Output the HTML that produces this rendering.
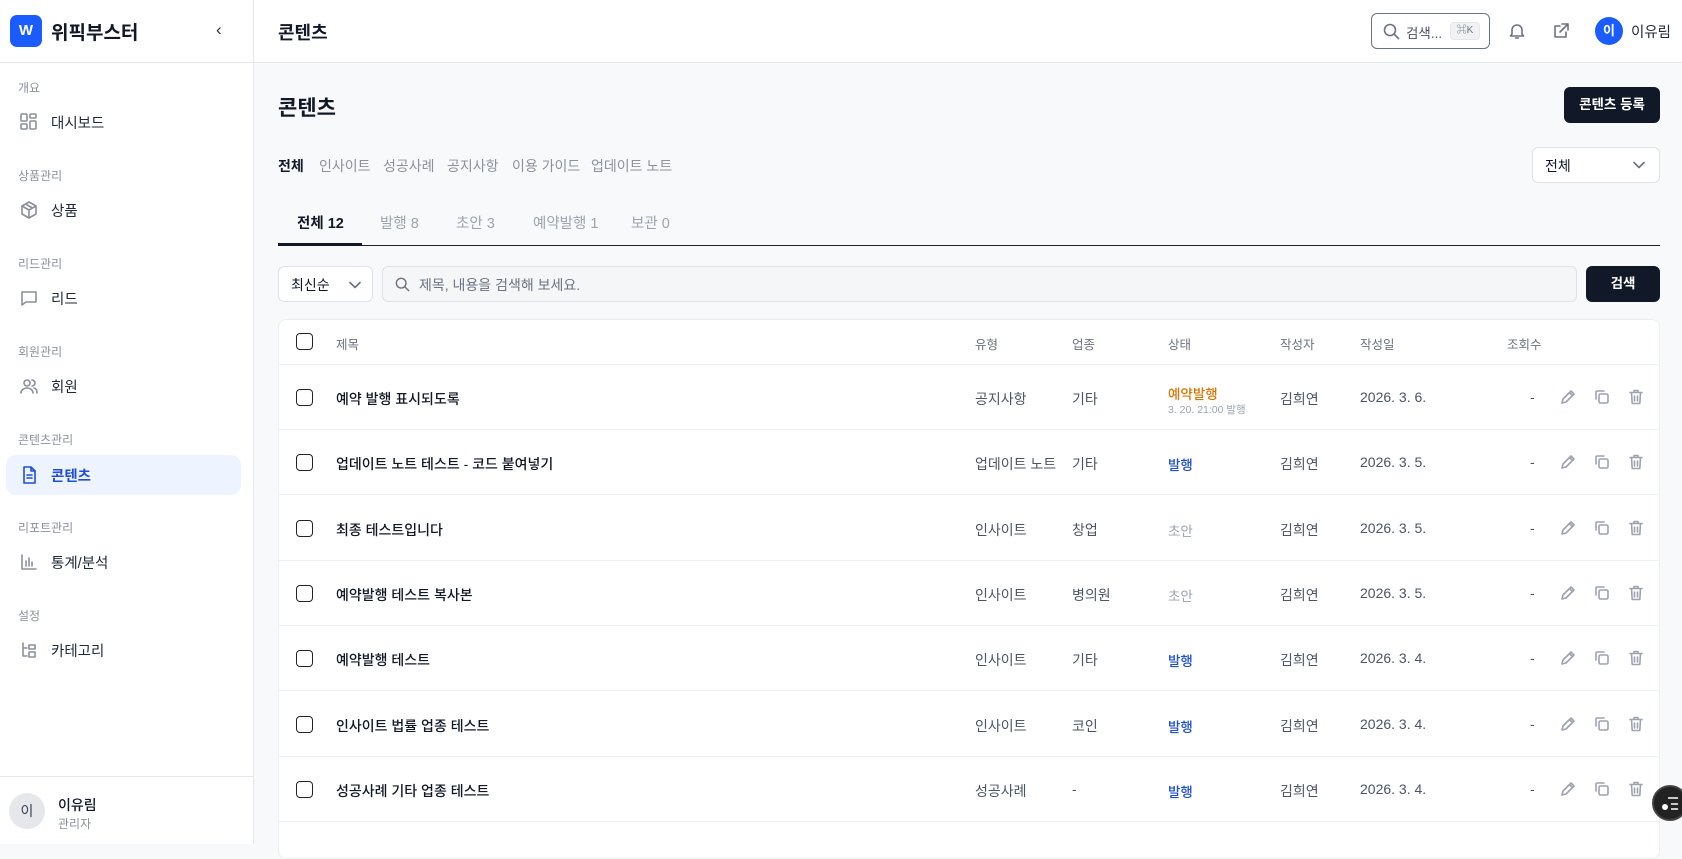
<!DOCTYPE html>
<html><head><meta charset="utf-8">
<style>
*{box-sizing:border-box;margin:0;padding:0}
body{width:1682px;height:844px;overflow:hidden;font-family:"Liberation Sans","Noto Sans CJK KR",sans-serif;background:#f8f9fb;color:#111827;position:relative}
.sb{position:absolute;left:0;top:0;width:254px;height:844px;background:#fff;border-right:1px solid #e5e7eb}
.abs{position:absolute}
.sec{position:absolute;left:18px;font-size:12px;color:#8b919c}
.item{position:absolute;left:6px;width:235px;height:40px;display:flex;align-items:center;padding-left:13px;font-size:14.5px;color:#1f2937;border-radius:10px}
.item svg{width:20px;height:20px;margin-right:12px;fill:none;stroke:#8a909b;stroke-width:1.6;stroke-linecap:round;stroke-linejoin:round}
.item.act{background:#edf4ff;color:#1d4ed8;font-weight:bold}
.item.act svg{stroke:#1d4ed8}
.top{position:absolute;left:254px;top:0;right:0;height:63px;background:#fff;border-bottom:1px solid #e5e7eb}
.ic{fill:none;stroke:#6b7280;stroke-width:1.6;stroke-linecap:round;stroke-linejoin:round}
.cat{position:absolute;top:156px;font-size:14px;color:#8b919c}
.tab{position:absolute;top:212px;font-size:14.5px;color:#9ca3af}
.card{position:absolute;left:278px;top:319px;width:1382px;height:540px;background:#fff;border:1px solid #eceef1;border-radius:8px}
.row{position:absolute;left:0;width:1380px;border-bottom:1px solid #eef0f2;font-size:14px;color:#4b5563}
.row span{position:absolute}
.cb{position:absolute;left:17px;width:17px;height:17px;border:1.6px solid #222;border-radius:4px}
.t{left:57px;color:#111827;font-weight:500}
</style></head><body>
<div class="sb">
  <div class="abs" style="left:10px;top:15px;width:32px;height:32px;background:#1a5cff;border-radius:7px;color:#fff;font-weight:bold;font-size:15px;text-align:center;line-height:32px">W</div>
  <div class="abs" style="left:51px;top:18px;font-size:19px;font-weight:bold">위픽부스터</div>
  <div class="abs" style="left:216px;top:20px;font-size:17px;color:#333">‹</div>
  <div class="abs" style="left:0;top:62px;width:254px;border-top:1px solid #e5e7eb"></div>
  <div class="sec" style="top:79px">개요</div>
  <div class="item" style="top:102px"><svg viewBox="0 0 20 20"><rect x="2" y="2" width="6" height="7" rx="1"/><rect x="11" y="2" width="6" height="4" rx="1"/><rect x="2" y="12" width="6" height="5" rx="1"/><rect x="11" y="9" width="6" height="8" rx="1"/></svg>대시보드</div>
  <div class="sec" style="top:167px">상품관리</div>
  <div class="item" style="top:190px"><svg viewBox="0 0 20 20"><path d="M10 2l7 4v8l-7 4-7-4V6z M3 6l7 4 7-4 M10 10v8 M6.5 4l7 4"/></svg>상품</div>
  <div class="sec" style="top:255px">리드관리</div>
  <div class="item" style="top:278px"><svg viewBox="0 0 20 20"><path d="M3 4h14v10H7l-4 3z"/></svg>리드</div>
  <div class="sec" style="top:343px">회원관리</div>
  <div class="item" style="top:366px"><svg viewBox="0 0 20 20"><circle cx="8" cy="7" r="3"/><path d="M2 17c0-3 3-5 6-5s6 2 6 5 M13 4a3 3 0 010 6 M15 12c2 .5 3 2.5 3 5"/></svg>회원</div>
  <div class="sec" style="top:431px">콘텐츠관리</div>
  <div class="item act" style="top:455px"><svg viewBox="0 0 20 20"><path d="M5 2h7l4 4v12H5z M12 2v4h4 M8 10h5 M8 13h5"/></svg>콘텐츠</div>
  <div class="sec" style="top:519px">리포트관리</div>
  <div class="item" style="top:542px"><svg viewBox="0 0 20 20"><path d="M3 3v14h14 M7 14V9 M10 14V6 M13 14v-4"/></svg>통계/분석</div>
  <div class="sec" style="top:607px">설정</div>
  <div class="item" style="top:630px"><svg viewBox="0 0 20 20"><path d="M4 3v13h4 M4 8h4 M10 5h6v4h-6z M10 12h6v5h-6z"/></svg>카테고리</div>
  <div class="abs" style="left:0;top:776px;width:254px;border-top:1px solid #e5e7eb"></div>
  <div class="abs" style="left:9px;top:793px;width:36px;height:36px;border-radius:50%;background:#e5e7eb;text-align:center;line-height:36px;font-size:14px;color:#374151">이</div>
  <div class="abs" style="left:58px;top:795px;font-size:14px;font-weight:500">이유림</div>
  <div class="abs" style="left:58px;top:815px;font-size:12px;color:#8b919c">관리자</div>
</div>
<div class="top">
  <div class="abs" style="left:24px;top:19px;font-size:18px;font-weight:bold">콘텐츠</div>
  <div class="abs" style="left:1117px;top:13px;width:119px;height:36px;border:1.3px solid #6b7280;border-radius:6px">
    <svg class="abs ic" style="left:11px;top:9px" width="17" height="17" viewBox="0 0 17 17"><circle cx="7" cy="7" r="5.5"/><path d="M11 11l4.5 4.5"/></svg>
    <span class="abs" style="left:34px;top:8px;font-size:13.5px;color:#4b5563">검색...</span>
    <span class="abs" style="left:78px;top:8px;width:30px;height:18px;background:#f1f2f4;border:1px solid #e5e7eb;border-radius:4px;font-size:10px;color:#6b7280;text-align:center;line-height:16px">⌘K</span>
  </div>
  <svg class="abs ic" style="left:1254px;top:22px" width="18" height="18" viewBox="0 0 18 18"><path d="M4 12V8a5 5 0 0110 0v4l1.5 2h-13z M7.5 16h3"/></svg>
  <svg class="abs ic" style="left:1298px;top:22px" width="18" height="18" viewBox="0 0 18 18"><path d="M14 10v5H3V4h5 M10 2h6v6 M16 2L8 10"/></svg>
  <div class="abs" style="left:1341px;top:17px;width:28px;height:28px;border-radius:50%;background:#1a5cff;color:#fff;font-size:13px;font-weight:bold;text-align:center;line-height:28px">이</div>
  <div class="abs" style="left:1377px;top:21px;font-size:14.5px;color:#1f2937">이유림</div>
</div>
<div class="abs" style="left:278px;top:92px;font-size:21px;font-weight:bold">콘텐츠</div>
<div class="abs" style="left:1564px;top:87px;width:96px;height:36px;background:#111827;border-radius:6px;color:#fff;font-size:13.5px;font-weight:bold;text-align:center;line-height:36px">콘텐츠 등록</div>
<div class="cat" style="left:278px;color:#111827;font-weight:bold">전체</div>
<div class="cat" style="left:319px">인사이트</div>
<div class="cat" style="left:383px">성공사례</div>
<div class="cat" style="left:447px">공지사항</div>
<div class="cat" style="left:512px">이용 가이드</div>
<div class="cat" style="left:591px">업데이트 노트</div>
<div class="abs" style="left:1532px;top:147px;width:128px;height:36px;background:#fff;border:1px solid #dfe2e6;border-radius:6px"><span class="abs" style="left:12px;top:8px;font-size:14px">전체</span><svg class="abs ic" style="left:100px;top:13px" width="12" height="8" viewBox="0 0 12 8"><path d="M1 1.5l5 5 5-5"/></svg></div>
<div class="tab" style="left:297px;color:#111827;font-weight:bold">전체 12</div>
<div class="tab" style="left:380px">발행 8</div>
<div class="tab" style="left:456px">초안 3</div>
<div class="tab" style="left:533px">예약발행 1</div>
<div class="tab" style="left:631px">보관 0</div>
<div class="abs" style="left:278px;top:245px;width:1382px;height:1px;background:#222"></div>
<div class="abs" style="left:278px;top:243px;width:84px;height:3px;background:#111827"></div>
<div class="abs" style="left:278px;top:266px;width:95px;height:36px;background:#fff;border:1px solid #dfe2e6;border-radius:6px"><span class="abs" style="left:12px;top:8px;font-size:14px">최신순</span><svg class="abs ic" style="left:70px;top:14px" width="12" height="8" viewBox="0 0 12 8"><path d="M1 1.5l5 5 5-5"/></svg></div>
<div class="abs" style="left:382px;top:266px;width:1195px;height:36px;background:#f5f6f8;border:1px solid #dfe2e6;border-radius:6px"><svg class="abs ic" style="left:12px;top:10px" width="15" height="15" viewBox="0 0 17 17"><circle cx="7" cy="7" r="5.5"/><path d="M11 11l4.5 4.5"/></svg><span class="abs" style="left:36px;top:8px;font-size:14px;color:#6b7280">제목, 내용을 검색해 보세요.</span></div>
<div class="abs" style="left:1586px;top:266px;width:74px;height:36px;background:#111827;border-radius:6px;color:#fff;font-size:13.5px;font-weight:bold;text-align:center;line-height:36px">검색</div>
<div class="card">
  <div class="row" style="top:0;height:45px;font-size:12.5px;color:#6b7280">
    <div class="cb" style="top:13px"></div>
    <span style="left:57px;top:14px">제목</span><span style="left:696px;top:14px">유형</span><span style="left:793px;top:14px">업종</span><span style="left:889px;top:14px">상태</span><span style="left:1001px;top:14px">작성자</span><span style="left:1081px;top:14px">작성일</span><span style="left:1228px;top:14px">조회수</span>
  </div>
  <div id="rows"></div>
</div>
<div class="abs" style="left:1652px;top:785px;width:36px;height:36px;border-radius:50%;background:#222;border:2px solid #444">
  <svg class="abs" style="left:6px;top:8px" width="20" height="18" viewBox="0 0 20 18"><path d="M8 3h10 M11 9h7 M11 14h7" stroke="#fff" stroke-width="1.6" fill="none"/><circle cx="5" cy="12" r="3" fill="#fff"/></svg>
</div>
<script>
const d=[["예약 발행 표시되도록","공지사항","기타","예약발행","2026. 3. 6."],["업데이트 노트 테스트 - 코드 붙여넣기","업데이트 노트","기타","발행","2026. 3. 5."],["최종 테스트입니다","인사이트","창업","초안","2026. 3. 5."],["예약발행 테스트 복사본","인사이트","병의원","초안","2026. 3. 5."],["예약발행 테스트","인사이트","기타","발행","2026. 3. 4."],["인사이트 법률 업종 테스트","인사이트","코인","발행","2026. 3. 4."],["성공사례 기타 업종 테스트","성공사례","-","발행","2026. 3. 4."]];
let h='';
d.forEach((r,i)=>{const top=45+i*65.3;let st;
if(r[3]=='예약발행')st='<span style="left:889px;top:18px;color:#d97706;font-weight:500;font-size:13.5px">예약발행</span><span style="left:889px;top:37px;font-size:10.5px;color:#9ca3af">3. 20. 21:00 발행</span>';
else if(r[3]=='발행')st='<span style="left:889px;top:24px;color:#1d4ed8;font-weight:500;font-size:13.5px">발행</span>';
else st='<span style="left:889px;top:24px;color:#9ca3af;font-size:13.5px">초안</span>';
h+=`<div class="row" style="top:${top}px;height:65px"><div class="cb" style="top:24px"></div><span class="t" style="top:24px">${r[0]}</span><span style="left:696px;top:24px">${r[1]}</span><span style="left:793px;top:24px">${r[2]}</span>${st}<span style="left:1001px;top:24px">김희연</span><span style="left:1081px;top:24px">${r[4]}</span><span style="left:1251px;top:24px">-</span>
<svg class="ic" style="position:absolute;left:1280px;top:23px;stroke:#9ca3af" width="18" height="18" viewBox="0 0 18 18"><path d="M3 15l1-4 8-8 3 3-8 8z M10.5 4.5l3 3"/></svg>
<svg class="ic" style="position:absolute;left:1314px;top:23px;stroke:#9ca3af" width="18" height="18" viewBox="0 0 18 18"><rect x="6" y="6" width="9" height="9" rx="1.5"/><path d="M3 11V4a1 1 0 011-1h7"/></svg>
<svg class="ic" style="position:absolute;left:1348px;top:23px;stroke:#9ca3af" width="18" height="18" viewBox="0 0 18 18"><path d="M3 4.5h12 M7 4.5V2.5h4v2 M4.5 4.5l.7 11h7.6l.7-11 M7.5 8v5 M10.5 8v5"/></svg></div>`;});
document.getElementById('rows').innerHTML=h;
</script>
</body></html>
